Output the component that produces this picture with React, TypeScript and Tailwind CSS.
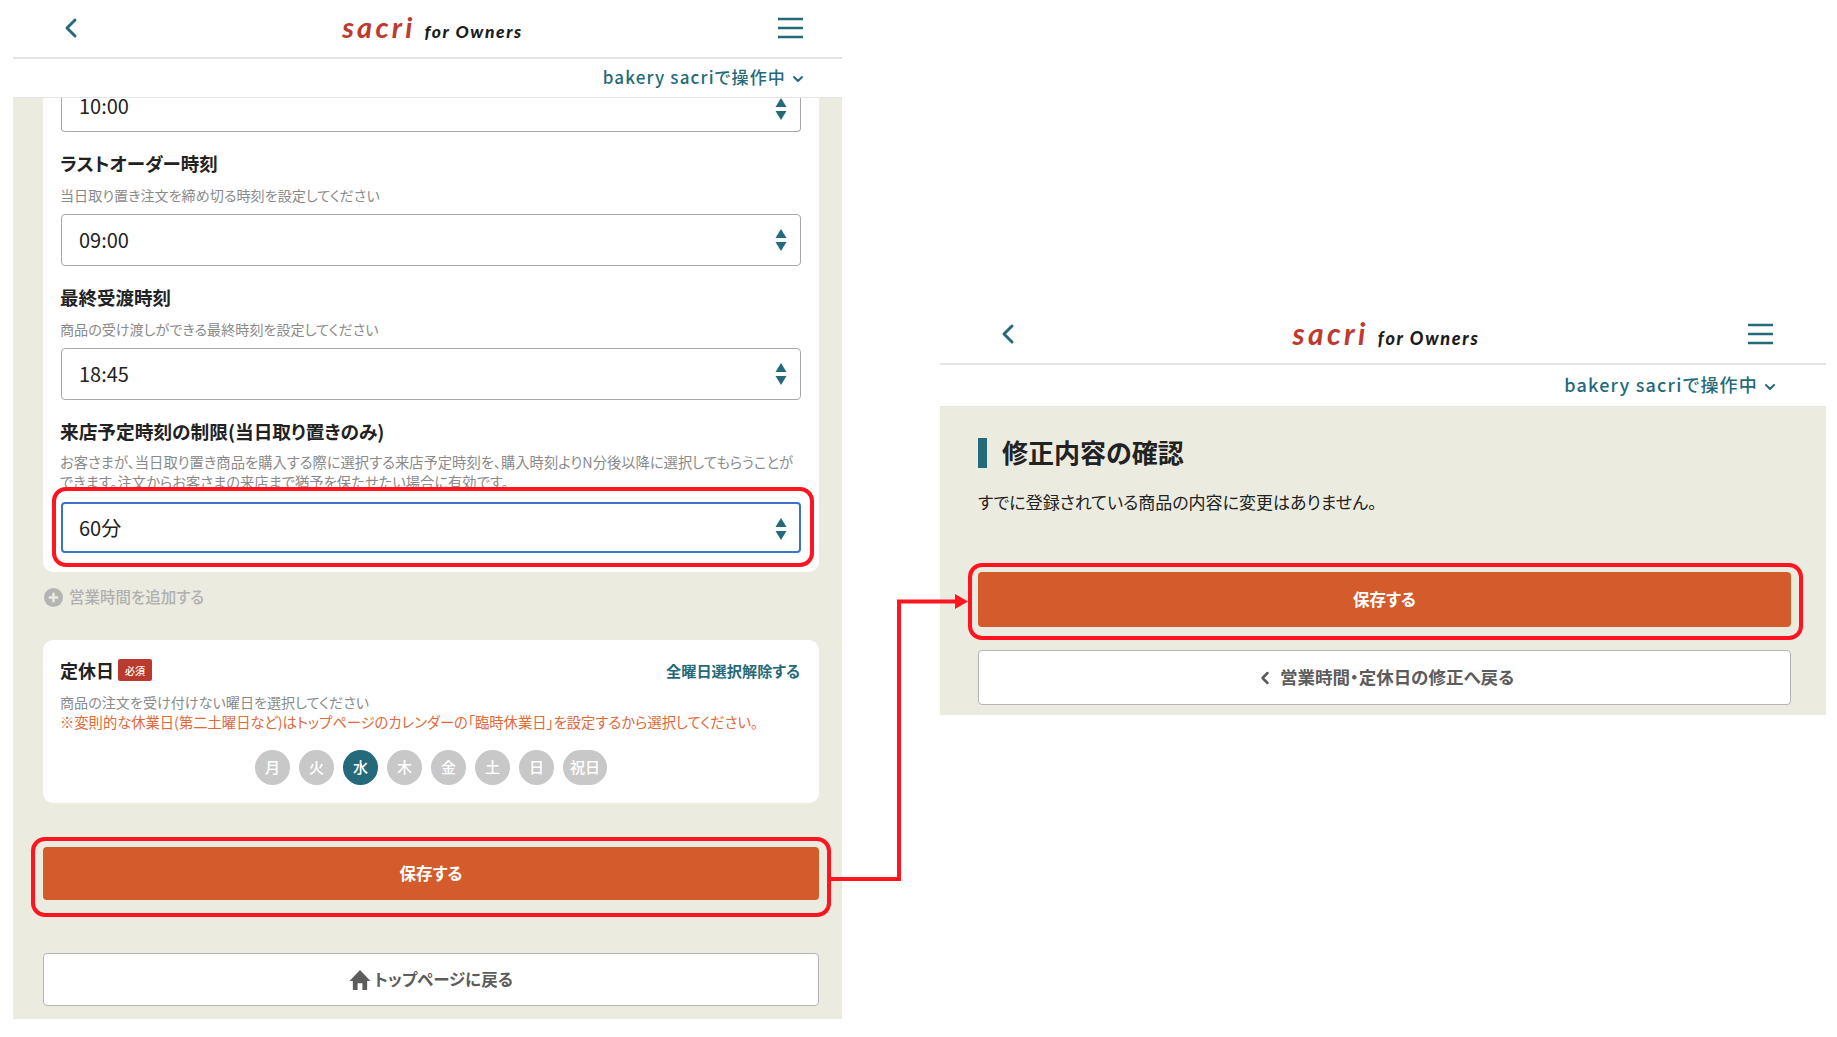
import { ChevronDown, ChevronLeft } from 'lucide-react';

const FONT = "font-['Noto_Sans_CJK_JP','Noto_Sans',sans-serif]";

function Hamburger() {
  return (
    <svg width="25" height="22" viewBox="0 0 25 22" className="-mt-[2px]">
      <path d="M0 2h25M0 11h25M0 20h25" stroke="#256a7a" strokeWidth="2.6" />
    </svg>
  );
}

function Header({ headerClass, barClass, barTextClass, sacriClass, ownersClass }: { headerClass: string; barClass: string; barTextClass: string; sacriClass: string; ownersClass: string }) {
  return (
    <header className="bg-white">
      <div className={`h-[59px] flex items-center justify-between border-b-2 border-[#e4e4e4] ${headerClass}`}>
        <ChevronLeft className="w-8 h-8 -mt-[2px] text-[#256a7a]" strokeWidth={2.2} />
        {/* Logo */}
        <div className="flex items-baseline gap-[9px] -mt-[4px] font-['Lato',sans-serif]">
          <span className={`leading-none font-bold italic text-[#c0392f] ${sacriClass}`}>sacri</span>
          <span className={`leading-none font-black italic text-[#1c1c1c] ${ownersClass}`}>for Owners</span>
        </div>
        <Hamburger />
      </div>
      <div className={`flex items-center justify-end border-b border-[#e4e4e4] text-[#256a7a] ${barClass}`}>
        <span className={`-mt-[3px] leading-none font-medium ${barTextClass}`}>bakery sacriで操作中</span>
        <ChevronDown className="w-4 h-4 ml-[4px] mt-[2px]" strokeWidth={3} />
      </div>
    </header>
  );
}

function SortArrows() {
  return (
    <svg width="12" height="23" viewBox="0 0 12 23" className="shrink-0">
      <path d="M6 0 L11.5 9 H0.5 Z" fill="#256a7a" />
      <path d="M0.5 13 H11.5 L6 22 Z" fill="#256a7a" />
    </svg>
  );
}

function TimeSelect({ value }: { value: string }) {
  return (
    <div className="h-[52px] flex items-center justify-between pl-[17px] pr-[13px] bg-white border border-[#a8a8a8] rounded-[4px] text-[20px] text-[#222]">
      <span>{value}</span>
      <SortArrows />
    </div>
  );
}

function Field({ label, hint, value }: { label: string; hint: string; value: string }) {
  return (
    <div className="mt-[18px]">
      <h3 className="-ml-[1px] text-[18.5px] leading-[26px] font-bold text-[#222]">{label}</h3>
      <p className="-ml-[1px] mt-[9px] text-[14.1px] leading-[20px] text-[#8a8a8a]">{hint}</p>
      <div className="mt-[9px]">
        <TimeSelect value={value} />
      </div>
    </div>
  );
}

function Day({ label, active, wide }: { label: string; active?: boolean; wide?: boolean }) {
  return (
    <span className={`h-[35px] rounded-full flex items-center justify-center text-[15px] font-medium text-white ${wide ? 'w-[44px]' : 'w-[35px]'} ${active ? 'bg-[#256a7a]' : 'bg-[#c8c8c8]'}`}>
      {label}
    </span>
  );
}

export default function App() {
  return (
    <div className={`relative w-[1837px] h-[1037px] overflow-hidden bg-white flex items-start pl-[13px] gap-[98px] ${FONT} [font-feature-settings:'palt']`}>
      {/* Left phone */}
      <section className="w-[829px] shrink-0">
        <Header
          headerClass="pl-[42px] pr-[39px]"
          barClass="h-[39px] pr-[36px]"
          barTextClass="text-[17px] tracking-[1.15px]"
          sacriClass="text-[29px] tracking-[3.2px]"
          ownersClass="text-[17.5px] tracking-[1.6px]"
        />
        <main className="bg-[#ebebe0] pl-[30px] pr-[23px] pb-[13px]">
          <div className="bg-white rounded-b-[10px] px-[18px] pb-[19px]">
            <div className="h-[34px] flex items-start justify-between pl-[17px] pr-[13px] border-x border-b border-[#a8a8a8] rounded-b-[4px] text-[20px] leading-[16px] text-[#222]">
              <span>10:00</span>
              <SortArrows />
            </div>
            <Field label="ラストオーダー時刻" hint="当日取り置き注文を締め切る時刻を設定してください" value="09:00" />
            <Field label="最終受渡時刻" hint="商品の受け渡しができる最終時刻を設定してください" value="18:45" />
            <div className="mt-[18px]">
              <h3 className="-ml-[1px] text-[18.7px] leading-[26px] font-bold text-[#222]">来店予定時刻の制限(当日取り置きのみ)</h3>
              <p className="-ml-[1px] mt-[8px] pr-[6px] text-[14.3px] leading-[20px] text-[#8a8a8a]">
                お客さまが、当日取り置き商品を購入する際に選択する来店予定時刻を、購入時刻よりN分後以降に選択してもらうことができます。注文からお客さまの来店まで猶予を保たせたい場合に有効です。
              </p>
              <div className="relative mt-[10px]">
                <div className="absolute -left-[9px] -right-[13px] -top-[15px] -bottom-[14px] bg-white border-4 border-[#ff1420] rounded-[14px]" />
                <div className="relative h-[51px] flex items-center justify-between pl-[16px] pr-[12px] bg-white border-2 border-[#3a74c9] rounded-[4px] text-[20px] text-[#222]">
                  <span>60分</span>
                  <span className="mt-[3px]">
                    <SortArrows />
                  </span>
                </div>
              </div>
            </div>
          </div>

          <div className="mt-[15px] h-[20px] flex items-center gap-[6px] ml-[1px] text-[15.5px] font-medium text-[#b0b0b0]">
            <svg width="19" height="19" viewBox="0 0 18 18">
              <circle cx="9" cy="9" r="9" fill="#b4b4b4" />
              <path d="M9 4.5v9M4.5 9h9" stroke="#ebebe0" strokeWidth="2.4" />
            </svg>
            <span>営業時間を追加する</span>
          </div>

          <div className="mt-[33px] bg-white rounded-[10px] px-[18px] pt-[17px] pb-[18px]">
            <div className="h-[26px] flex items-center justify-between">
              <div className="flex items-center gap-[4px] -ml-[1px]">
                <h3 className="text-[18px] leading-[26px] font-bold text-[#222]">定休日</h3>
                <span className="w-[34px] h-[22px] flex items-center justify-center rounded-[2px] bg-[#b93a2e] text-[10px] font-medium text-white">必須</span>
              </div>
              <span className="pr-[1px] text-[15.2px] font-bold text-[#256a7a]">全曜日選択解除する</span>
            </div>
            <p className="-ml-[1px] mt-[9px] text-[14.1px] leading-[20px] text-[#8a8a8a]">商品の注文を受け付けない曜日を選択してください</p>
            <p className="-ml-[1px] text-[14.3px] leading-[20px] text-[#e2683a]">※変則的な休業日(第二土曜日など)はトップページのカレンダーの「臨時休業日」を設定するから選択してください。</p>
            <div className="mt-[18px] flex justify-center gap-[9px]">
              <Day label="月" />
              <Day label="火" />
              <Day label="水" active />
              <Day label="木" />
              <Day label="金" />
              <Day label="土" />
              <Day label="日" />
              <Day label="祝日" wide />
            </div>
          </div>

          <div className="relative mt-[44px]">
            <div className="absolute -left-[12px] -right-[12px] -top-[10px] -bottom-[17px] border-4 border-[#ff1420] rounded-[14px]" />
            <button className="relative w-full h-[53px] rounded-[4px] bg-[#d45b2c] text-[16.5px] font-bold text-white">保存する</button>
          </div>

          <button className="mt-[53px] w-full h-[53px] flex items-center justify-center gap-[3px] bg-white border border-[#b4b4b4] rounded-[4px] text-[16.5px] font-bold text-[#5c5c5c]">
            <svg width="22" height="22" viewBox="0 0 20 20">
              <path d="M10 1 L19.5 11 H16.5 V19 H12.2 V13 H7.8 V19 H3.5 V11 H0.5 Z" fill="#5c5c5c" />
            </svg>
            <span>トップページに戻る</span>
          </button>
        </main>
      </section>

      {/* Right phone */}
      <section className="w-[886px] shrink-0 mt-[306px]">
        <Header
          headerClass="pl-[52px] pr-[53px]"
          barClass="h-[42px] pr-[48px]"
          barTextClass="text-[18px] tracking-[1.2px]"
          sacriClass="text-[30px] tracking-[3.4px]"
          ownersClass="text-[18px] tracking-[1.7px]"
        />
        <main className="bg-[#ebebe0] pl-[38px] pr-[35px] pt-[31px] pb-[10px]">
          <h2 className="h-[30px] flex items-center gap-[15px] text-[26px] leading-[28px] font-bold text-[#222]">
            <span className="w-[9px] h-[30px] bg-[#256a7a]" />
            <span className="-mt-[2px]">修正内容の確認</span>
          </h2>
          <p className="mt-[22px] text-[17px] leading-[24px] text-[#222]">すでに登録されている商品の内容に変更はありません。</p>
          <div className="relative mt-[58px]">
            <div className="absolute -left-[10px] -right-[12px] -top-[9px] -bottom-[13px] border-4 border-[#ff1420] rounded-[14px]" />
            <button className="relative w-full h-[55px] rounded-[4px] bg-[#d45b2c] text-[16.5px] font-bold text-white">保存する</button>
          </div>
          <button className="mt-[23px] w-full h-[55px] flex items-center justify-center gap-[5px] bg-white border border-[#b4b4b4] rounded-[4px] text-[17.5px] font-bold text-[#5c5c5c]">
            <ChevronLeft className="w-5 h-5" strokeWidth={3} />
            <span>営業時間・定休日の修正へ戻る</span>
          </button>
        </main>
      </section>

      {/* Annotation arrow between the two save buttons */}
      <svg className="absolute left-0 top-0 pointer-events-none" width="1837" height="1037" viewBox="0 0 1837 1037">
        <path d="M831 879 H899 V601.5 H958" fill="none" stroke="#ff1420" strokeWidth="4" />
        <path d="M955 594 L968 601.5 L955 609 Z" fill="#ff1420" />
      </svg>
    </div>
  );
}
